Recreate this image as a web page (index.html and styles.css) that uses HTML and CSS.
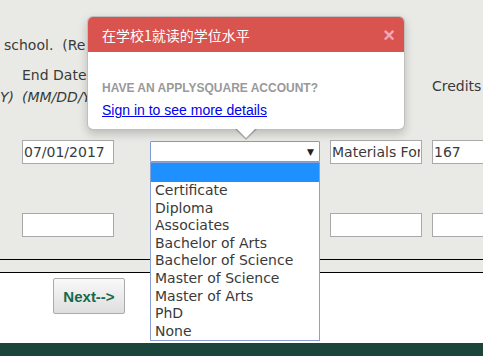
FILE: index.html
```html
<!DOCTYPE html>
<html lang="en">
<head>
  <meta charset="UTF-8">
  <title>Education</title>
  <link rel="stylesheet" href="styles.css">
</head>
<body>

<div class="page">
  <div class="form-area">
    <p class="intro">school.&nbsp; (Re</p>

    <div class="grid">
      <!-- header row -->
      <div class="cell head head-prev"><span class="hint">Y)</span></div>
      <div class="cell head">End Date<br><span class="hint">(MM/DD/YYYY)</span></div>
      <div class="cell head"></div>
      <div class="cell head"></div>
      <div class="cell head head-mid">Credits</div>

      <!-- row 1 -->
      <div class="cell"></div>
      <div class="cell"><input class="field" type="text" value="07/01/2017"></div>
      <div class="cell">
        <div class="select-wrap">
          <div class="select-box"><span class="select-arrow">&#9660;</span></div>
          <!-- open list -->
          <ul class="select-list">
            <li class="picked">&nbsp;</li>
            <li>Certificate</li>
            <li>Diploma</li>
            <li>Associates</li>
            <li>Bachelor of Arts</li>
            <li>Bachelor of Science</li>
            <li>Master of Science</li>
            <li>Master of Arts</li>
            <li>PhD</li>
            <li>None</li>
          </ul>
        </div>
      </div>
      <div class="cell"><input class="field" type="text" value="Materials Forming"></div>
      <div class="cell"><input class="field" type="text" value="167"></div>

      <!-- row 2 -->
      <div class="cell row2"></div>
      <div class="cell row2"><input class="field" type="text"></div>
      <div class="cell row2"></div>
      <div class="cell row2"><input class="field" type="text"></div>
      <div class="cell row2"><input class="field" type="text"></div>
    </div>
  </div>
  <div class="spacer"></div>

  <div class="actions">
    <button class="next-btn" type="button">Next--&gt;</button>
  </div>
  <div class="footer"></div>

  <!-- Info popover -->
  <div class="popover">
    <div class="popover-title">
      <span>在学校1就读的学位水平</span>
      <span class="close">&times;</span>
    </div>
    <div class="popover-body">
      <div class="account-label">HAVE AN APPLYSQUARE ACCOUNT?</div>
      <a href="#" class="signin">Sign in to see more details</a>
    </div>
  </div>
</div>

</body>
</html>
```

FILE: styles.css
```css
/* Reset */
html, body {
  margin: 0;
  padding: 0;
}

body {
  font-family: "DejaVu Sans", sans-serif;
  font-size: 14px;
  color: #3a3a3a;
  background: #fff;
  overflow: hidden;
}

.page {
  position: relative;
  width: 483px;
  height: 356px;
  overflow: hidden;
}

/* Grey form area */
.form-area {
  background: #e9eae5;
  border-bottom: 1px solid #000;
  height: 259px;
}

.intro {
  margin: 0;
  padding: 36px 0 0 4px;
  line-height: 18px;
  white-space: nowrap;
}

.grid {
  display: grid;
  grid-template-columns: 22px 128px 180px 102px 1fr;
  margin-top: 10px;
}

.cell {
  box-sizing: border-box;
  display: flex;
  align-items: center;
  height: 24px;
  margin-top: 32px;
  white-space: nowrap;
}

.cell.head {
  display: block;
  height: 44px;
  margin-top: 0;
  line-height: 22px;
}

.cell.head-prev {
  padding-top: 22px;
}

.cell.head-mid {
  display: flex;
  align-items: center;
}

.hint {
  font-style: italic;
}

.cell.row2 {
  margin-top: 49px;
}

.field {
  box-sizing: border-box;
  width: 92px;
  height: 24px;
  margin: 0;
  padding: 0 1px;
  border: 1px solid #a9a9a9;
  background: #fff;
  font-family: "DejaVu Sans", sans-serif;
  font-size: 14px;
  color: #3a3a3a;
}

/* Fake opened select */
.select-wrap {
  position: relative;
  width: 170px;
}

.select-box {
  box-sizing: border-box;
  height: 21px;
  margin-top: -1px;
  border: 1px solid #7f9bd4;
  border-radius: 1px;
  background: #fff;
  display: flex;
  justify-content: flex-end;
  align-items: center;
  padding-right: 5px;
}

.select-arrow {
  font-size: 9px;
  color: #222;
}

.select-list {
  position: absolute;
  top: 20px;
  left: 0;
  z-index: 2;
  box-sizing: border-box;
  width: 170px;
  margin: 0;
  padding: 0;
  list-style: none;
  background: #fff;
  border: 1px solid #8a9fd4;
}

.select-list li {
  height: 17.6px;
  line-height: 17.6px;
  padding-left: 4px;
}

.select-list li.picked {
  background: #1e90ff;
  height: 19px;
}

.spacer {
  height: 12px;
  background: #e9eae5;
  border-bottom: 1px solid #000;
}

/* Button area */
.actions {
  height: 70px;
  padding: 5px 0 0 53px;
  box-sizing: border-box;
}

.next-btn {
  width: 72px;
  height: 36px;
  border: 1px solid #ababab;
  border-radius: 2px;
  background: linear-gradient(#f9f9f9, #dedede);
  font-family: "Liberation Sans", Arial, sans-serif;
  font-weight: bold;
  font-size: 15px;
  color: #17694a;
  padding: 0;
}

.footer {
  height: 14px;
  background: #1b443a;
}

/* Popover */
.popover {
  position: absolute;
  left: 87px;
  top: 16px;
  width: 318px;
  box-sizing: border-box;
  background: #fff;
  border: 1px solid rgba(0, 0, 0, 0.25);
  border-radius: 6px;
  box-shadow: 0 4px 10px rgba(0, 0, 0, 0.2);
  z-index: 3;
}

.popover::before,
.popover::after {
  content: "";
  position: absolute;
  border-style: solid;
  border-color: transparent;
}

.popover::before {
  left: 147px;
  top: 100%;
  border-width: 11px 11px 0;
  border-top-color: rgba(0, 0, 0, 0.25);
}

.popover::after {
  left: 148px;
  top: 100%;
  margin-top: -1px;
  border-width: 10px 10px 0;
  border-top-color: #fff;
}

.popover-title {
  display: flex;
  justify-content: space-between;
  align-items: center;
  height: 35px;
  padding: 1px 14px 0 14px;
  box-sizing: border-box;
  background: #d9534f;
  border-radius: 5px 5px 0 0;
  color: #fff;
  font-family: "Noto Sans CJK SC", sans-serif;
  font-size: 14px;
}

.close {
  font-family: "Liberation Sans", Arial, sans-serif;
  font-weight: bold;
  font-size: 20px;
  color: #f2a9b4;
  margin-right: -5px;
}

.popover-body {
  padding: 28px 14px 9px;
}

.account-label {
  font-family: "Liberation Sans", Arial, sans-serif;
  font-weight: bold;
  font-size: 12px;
  line-height: 16px;
  color: #999;
}

.signin {
  display: inline-block;
  margin-top: 4px;
  font-family: "Liberation Sans", Arial, sans-serif;
  font-size: 14px;
  line-height: 20px;
  color: #0000ee;
}
```
